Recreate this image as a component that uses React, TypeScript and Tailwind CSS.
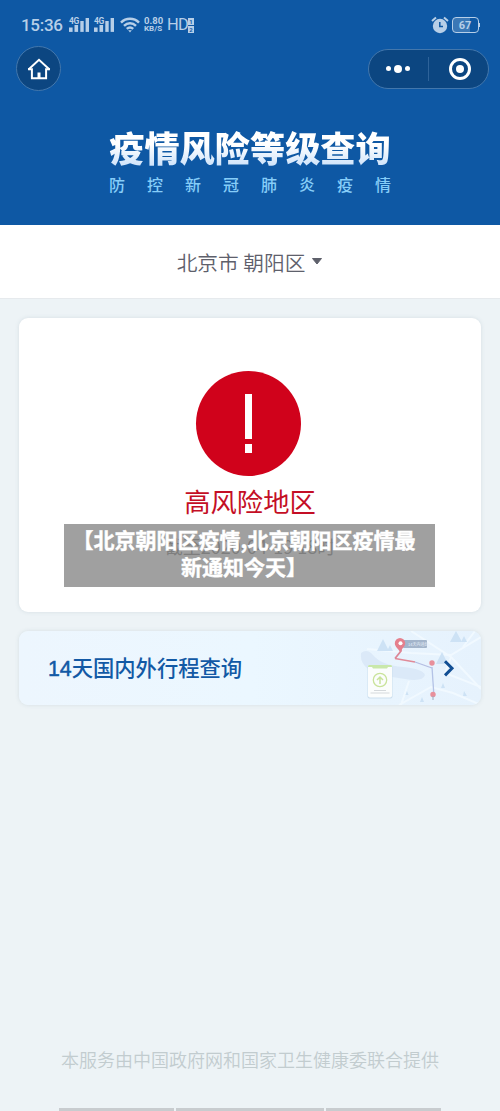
import React from 'react';

const SignalBars = () => (
  <div className="relative w-[21px] h-[18px]">
    <svg viewBox="0 0 21 18" className="w-[21px] h-[18px]" fill="#b7cfe8">
      <rect x="0" y="11.5" width="3.6" height="4.4" />
      <rect x="5.5" y="9" width="3.6" height="6.9" />
      <rect x="11.3" y="5" width="3.4" height="10.9" />
      <rect x="16.6" y="2" width="3.4" height="13.9" />
    </svg>
    <span className="absolute left-0 top-px text-[8.5px] leading-[8px] tracking-[-0.5px] font-bold">4G</span>
  </div>
);

const StatusBar = () => (
  <div className="flex items-center h-[18px] pl-[21px] pr-[20px] text-[#b7cfe8] font-['Roboto',sans-serif]">
    <span className="w-[48px] text-[17px] leading-[18px] tracking-[-0.3px] font-medium">15:36</span>
    <div className="flex gap-[4px]">
      <SignalBars />
      <SignalBars />
    </div>
    <svg viewBox="0 0 20 16" className="w-[20px] h-[16px] ml-[5px]" fill="none" stroke="#b7cfe8" strokeWidth="2.5">
      <path d="M1 5.6C6 0.6 14 0.6 19 5.6" />
      <path d="M4 8.9C7.5 5.5 12.5 5.5 16 8.9" />
      <path d="M6.8 11.9C8.7 10.2 11.3 10.2 13.2 11.9" />
      <path d="M8.2 13.2L10 15.5L11.8 13.2Z" fill="#b7cfe8" stroke="none" />
    </svg>
    <div className="flex flex-col w-[23px] ml-[4px] font-bold">
      <span className="text-[9.5px] leading-[8px]">0.80</span>
      <span className="text-[8px] leading-[8px]">KB/S</span>
    </div>
    <span className="text-[16.5px] leading-[18px] tracking-[-0.8px]">HD</span>
    <div className="flex flex-col gap-px text-[6px] leading-[7px] font-bold text-center text-[#0e58a4]">
      <span className="w-[6px] h-[7px] bg-[#b7cfe8]">1</span>
      <span className="w-[6px] h-[7px] bg-[#b7cfe8]">2</span>
    </div>
    <svg viewBox="0 0 18 18" className="w-[18px] h-[18px] ml-auto">
      <circle cx="9" cy="10" r="7.2" fill="#b7cfe8" />
      <path d="M1 5L5 1.5M17 5L13 1.5" stroke="#b7cfe8" strokeWidth="2" />
      <path d="M8.8 6V10.5H12" fill="none" stroke="#0e58a4" strokeWidth="1.5" />
    </svg>
    <div className="flex items-center ml-[3px]">
      <div className="flex items-center justify-center w-[27px] h-[16px] rounded-[4px] border border-[#b7cfe8] bg-[linear-gradient(90deg,#3b78b6_67%,#0e58a4_67%)] text-[11px] leading-none font-bold">67</div>
      <div className="w-[1.5px] h-[4px] bg-[#b7cfe8]" />
    </div>
  </div>
);

const NavBar = () => (
  <div className="flex items-center justify-between pl-[16px] pr-[11px] mt-[12px]">
    <div className="flex items-center justify-center w-[45px] h-[45px] rounded-full bg-[#0c4681] border border-[#4377ac]">
      <svg viewBox="0 0 24 22" className="w-[24px] h-[22px]" fill="none" stroke="#fff" strokeWidth="2">
        <path d="M1.5 11.5L12 1.8L22.5 11.5" />
        <path d="M1 11.3H4.900V20.2H19.1V11.3H23" />
        <path d="M12 14.5V20" strokeWidth="3" />
      </svg>
    </div>
    <div className="flex items-center w-[121px] h-[40px] rounded-full bg-[#0c4681] border border-[#4377ac]">
      <div className="flex items-center justify-center gap-[3px] w-[59px] pr-[2px]">
        <div className="w-[5px] h-[5px] rounded-full bg-white" />
        <div className="w-[8px] h-[8px] rounded-full bg-white" />
        <div className="w-[5px] h-[5px] rounded-full bg-white" />
      </div>
      <div className="w-px h-[24px] bg-[#2e639a]" />
      <div className="flex items-center justify-center flex-1 pl-[2px]">
        <div className="flex items-center justify-center w-[22px] h-[22px] rounded-full border-[3px] border-white">
          <div className="w-[8px] h-[8px] rounded-full bg-white" />
        </div>
      </div>
    </div>
  </div>
);

// faded city map with the route, on the right end of the trip card
const TripMap = () => (
  <svg viewBox="0 0 142 74" className="w-[142px] h-[74px]">
    <path d="M22 22Q28 17 34 24Q42 34 64 36Q84 38 86 44Q84 51 66 48L40 44Q20 36 22 22Z" fill="#dbe9f8" />
    <g fill="none" stroke="#f1f9ff" strokeWidth="2">
      <path d="M28 18L72 22L112 24L142 6" />
      <path d="M72 0L112 26L142 58" />
      <path d="M60 74L92 56L114 62L142 74" />
      <path d="M112 26L106 42L142 56M124 16L136 0" />
      <path d="M62 74L70 50" />
    </g>
    <g fill="#cde2f5">
      <path d="M44 8L50 20H38Z" />
      <path d="M51 14L54 20H48Z" />
      <path d="M117 0L123 11H111Z" />
      <path d="M125 5L128 11H122Z" />
      <path d="M103 21L109 33H97Z" />
      <path d="M68 60L69.5 64H66.5Z" />
      <path d="M83 66L85 71H81Z" />
      <path d="M104 52L106 57H102ZM125 60L128 65H124Z" />
    </g>
    <path d="M93 36L95 66" stroke="#b4c3e6" strokeWidth="1.3" />
    <path d="M62 14L62 20L56 27.500" fill="none" stroke="#dc8697" strokeWidth="1.8" />
    <path d="M56 27.5L76 31" stroke="#e08a98" strokeWidth="1.5" />
    <path d="M76 31L93 37" stroke="#b4bde2" strokeWidth="1.3" />
    <rect x="64" y="9" width="24" height="8" rx="1" fill="#a3b5cb" />
    <text x="69" y="14.600" fontSize="4" fill="#e9f1fa" fontFamily="Noto Sans CJK SC">14天内途经</text>
    <path d="M61 7A5.2 5.2 0 0 1 66.2 12.2C66.2 16 62 18 61 21C60 18 55.8 16 55.8 12.2A5.2 5.2 0 0 1 61 7Z" fill="#e5808d" />
    <circle cx="61.5" cy="12.3" r="2" fill="#fff" />
    <circle cx="93" cy="32" r="2.7" fill="#e8909b" />
    <circle cx="94" cy="63.5" r="2.7" fill="#e8909b" />
    <path d="M94 65V69" stroke="#9aabc0" strokeWidth="1" />
    <rect x="28.500" y="34.5" width="25" height="33" rx="2" fill="#ccdfee" />
    <rect x="29" y="34" width="24" height="32.500" rx="2" fill="#fbfdfd" />
    <path d="M30 34H52Q53 34 53 36H49L48 37.5H34L33 36H29Q29 34 30 34Z" fill="#c9e8ab" />
    <circle cx="41" cy="49" r="6.7" fill="none" stroke="#c9e39b" strokeWidth="1.3" />
    <path d="M41 53V46M38 49L41 46L44 49" fill="none" stroke="#c9e39b" strokeWidth="1.5" />
    <path d="M35 59.5H47M31.5 62H50.5" stroke="#d5d9dc" strokeWidth="1" />
    <path d="M106 30.2L113 37.3L106 44.400" fill="none" stroke="#124f94" strokeWidth="3" />
  </svg>
);

export default function App() {
  return (
    <div className="w-[500px] h-[1111px] overflow-hidden flex flex-col bg-[#edf3f6] font-['Noto_Sans_CJK_SC',sans-serif]">
      <header className="h-[225px] shrink-0 bg-[#0e58a4] pt-[16px]">
        <StatusBar />
        <NavBar />
        <h1 className="mt-[35px] text-center text-[35.2px] leading-[42px] font-black text-transparent bg-clip-text bg-[linear-gradient(#ffffff_45%,#d3e6fb_90%)]">疫情风险等级查询</h1>
        <div className="flex justify-between mx-auto mt-[6px] w-[282px] text-[16px] leading-[20px] font-medium text-[#86cdf8]">
          {[...'防控新冠肺炎疫情'].map((c, i) => (
            <span key={i}>{c}</span>
          ))}
        </div>
      </header>

      <div className="flex items-center justify-center h-[74px] shrink-0 bg-white border-b border-[#e6eaed]">
        <span className="text-[20.7px] leading-[30px] text-[#5e606b] font-[350]">北京市 朝阳区</span>
        <svg viewBox="0 0 12 7" className="w-[12px] h-[7px] ml-[6px]">
          <path d="M1.5 0.5H10.5L6 6Z" fill="#5e606b" stroke="#5e606b" strokeLinejoin="round" />
        </svg>
      </div>

      <section className="relative flex flex-col items-center mt-[19px] mx-[19px] h-[294px] shrink-0 rounded-[9px] bg-white shadow-[0_0_4px_rgba(80,110,130,0.15)]">
        <div className="flex flex-col items-center mt-[53px] mr-[3px] w-[105px] h-[105px] shrink-0 rounded-full bg-[#d0021b] pt-[23px] gap-[5px]">
          <div className="w-[7px] h-[45px] bg-white" />
          <div className="w-[7px] h-[9px] bg-white" />
        </div>
        <p className="mt-[7px] text-[26.3px] leading-[36px] text-[#c40e25]">高风险地区</p>
        <p className="mt-[13px] text-[18px] leading-[28px] text-[#777777]">截至2020-04-19 18时</p>
        <div className="absolute left-[45px] top-[206px] w-[371px] h-[63px] pt-[2px] pr-[11px] bg-[#808080]/75 text-white text-center text-[21px] leading-[26.5px] font-bold whitespace-nowrap [-webkit-text-stroke:0.4px_white]">
          【北京朝阳区疫情,北京朝阳区疫情最
          <br />
          新通知今天】
        </div>
      </section>

      <section className="flex items-center justify-between mt-[19px] mx-[19px] h-[74px] shrink-0 overflow-hidden rounded-[9px] bg-[linear-gradient(90deg,#edf6fe,#ebf7ff_50%,#e6f2fd)] shadow-[0_0_4px_rgba(80,110,130,0.15)]">
        <span className="ml-[29px] text-[21.3px] leading-[30px] font-medium text-[#1259a5]">
          <span className="font-['Liberation_Sans',sans-serif] [-webkit-text-stroke:0.5px_#1259a5]">14</span>天国内外行程查询
        </span>
        <TripMap />
      </section>

      <footer className="mt-auto">
        <p className="text-center text-[18px] leading-[26px] font-[350] text-[#c2cccf]">本服务由中国政府网和国家卫生健康委联合提供</p>
        <div className="flex gap-[2px] mt-[36px] mx-[59px] h-[3px]">
          <div className="w-[115px] bg-[#c8cccf]" />
          <div className="w-[148px] bg-[#c8cccf]" />
          <div className="flex-1 bg-[#c8cccf]" />
        </div>
      </footer>
    </div>
  );
}
